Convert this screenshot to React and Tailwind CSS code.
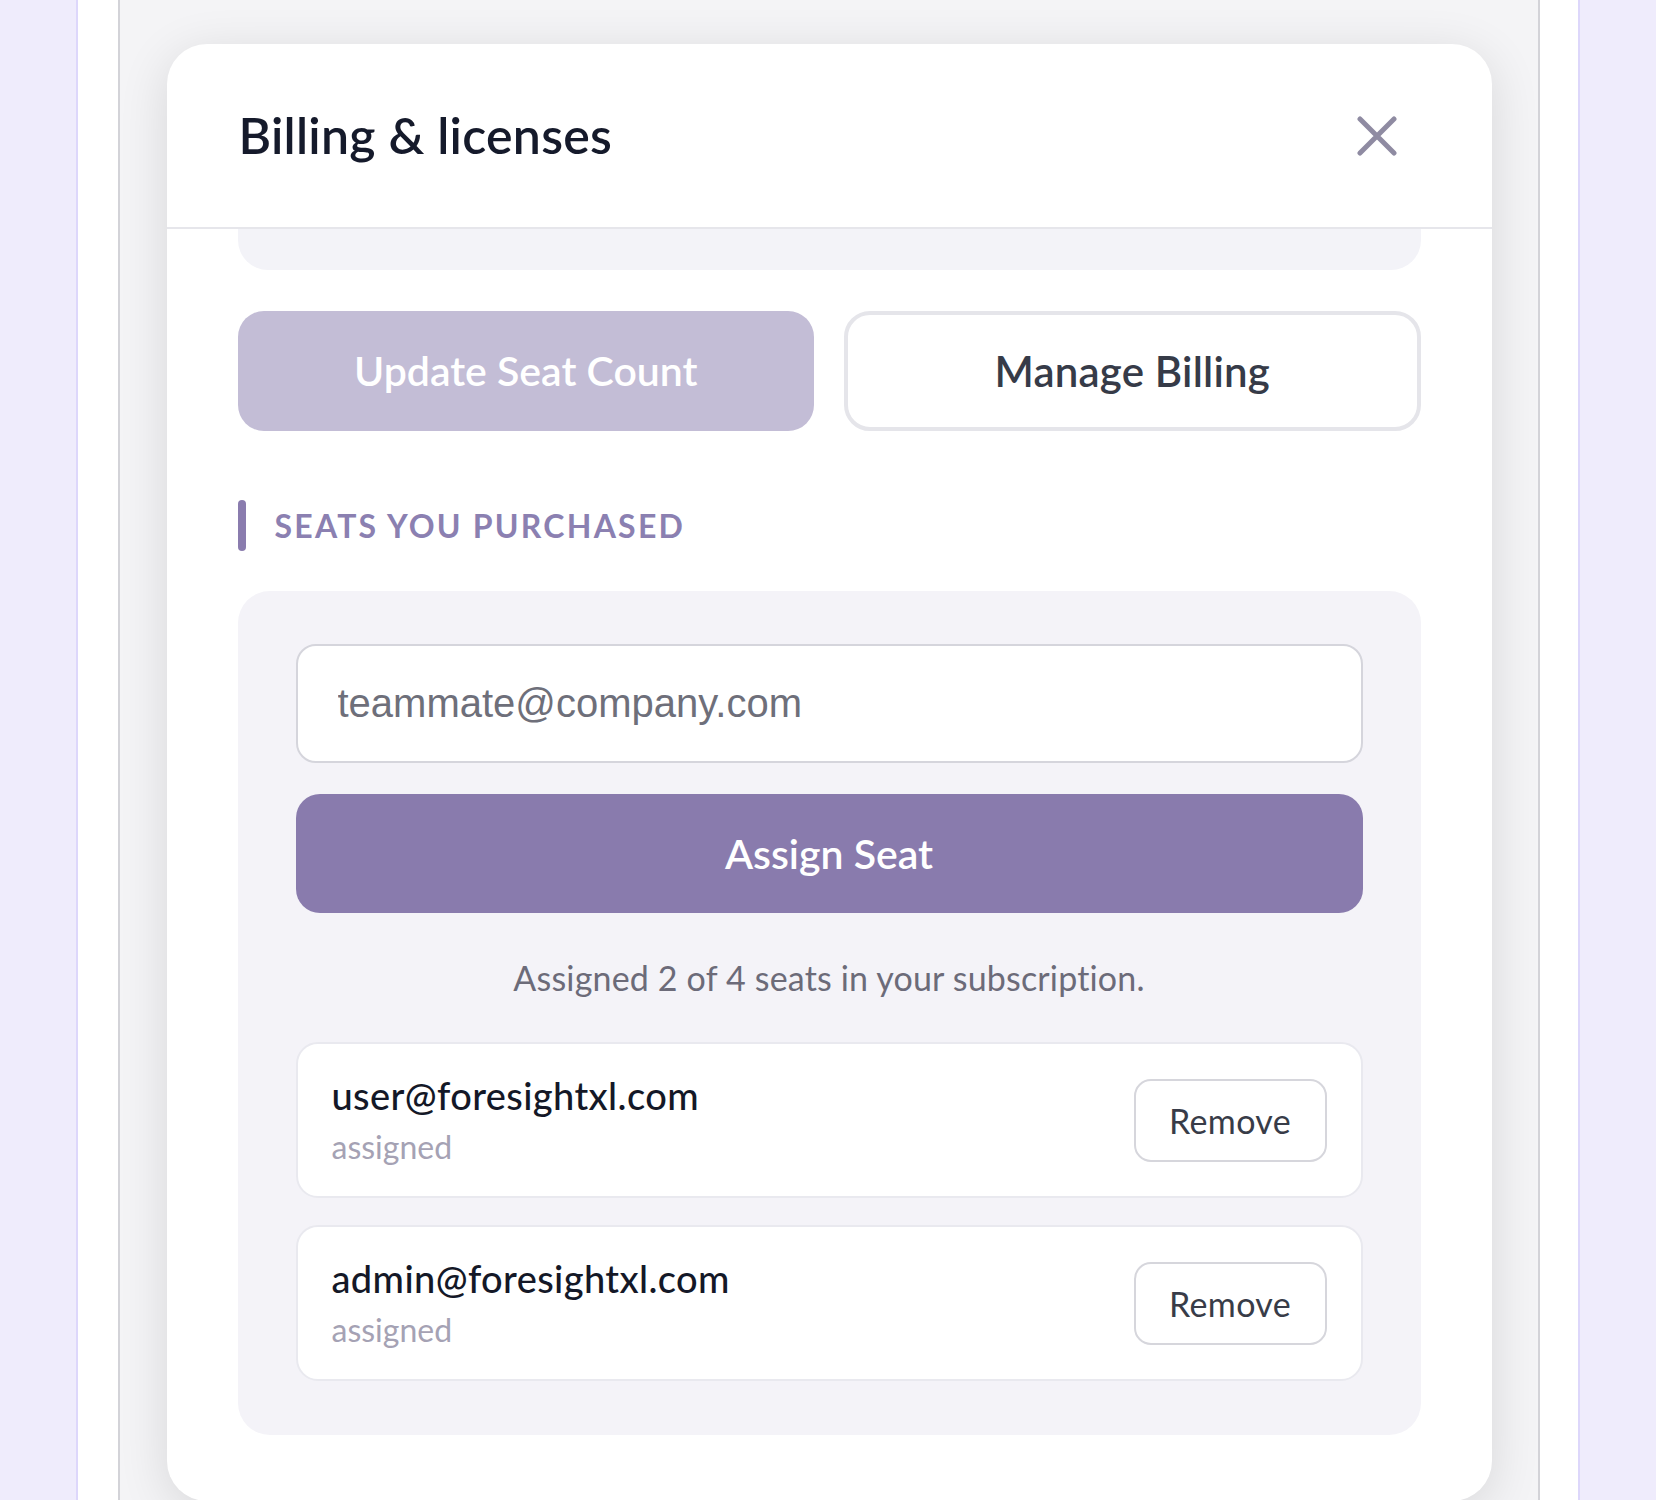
import React from 'react';

const seats = [
  { email: 'user@foresightxl.com', status: 'assigned' },
  { email: 'admin@foresightxl.com', status: 'assigned' },
];

const CloseIcon = () => (
  <svg width="40" height="40" viewBox="0 0 40 40" fill="none" stroke="#8f8ba2" strokeWidth="5" strokeLinecap="round">
    <path d="M3 3 37 37M37 3 3 37" />
  </svg>
);

const SeatRow = ({ seat }) => (
  <div className="flex items-center justify-between rounded-[22px] border-2 border-[#e9e9ef] bg-white pl-[34px] pr-[34px] h-[156px]">
    <div className="flex flex-col">
      <span className="text-[38px] leading-[50px] font-medium tracking-[0.01em] text-[#141827]">{seat.email}</span>
      <span className="text-[32px] leading-[48px] mt-[3px] text-[#a5a2b4]">{seat.status}</span>
    </div>
    <button className="h-[83px] w-[193px] rounded-[17px] border-2 border-[#d6d6dc] bg-white text-[34px] tracking-[0.01em] text-[#383c48]">
      Remove
    </button>
  </div>
);

const App = () => {
  return (
    <div className="min-h-screen bg-[#efecfc] px-[76px] font-['Lato','Noto_Sans',sans-serif]">
      <div className="min-h-screen bg-white border-x-2 border-[#ddd7fb] pl-[40px] pr-[38px]">
        <div className="min-h-screen bg-[#f4f4f6] border-x-2 border-[#d3d3d8] flex justify-center pt-[44px]">
          <div className="w-[1325px] rounded-[40px] bg-white shadow-[0_10px_50px_rgba(0,0,0,0.12)] overflow-hidden">
            {/* Header */}
            <div className="h-[185px] flex items-center justify-between pl-[72px] pr-[95px] border-b-2 border-[#e6e6eb]">
              <h2 className="text-[50px] font-semibold tracking-[0.005em] text-[#151a2b]">Billing &amp; licenses</h2>
              <button aria-label="Close">
                <CloseIcon />
              </button>
            </div>

            <div className="px-[71px] pb-[66px]">
              {/* scrolled-off summary card */}
              <div className="h-[41px] rounded-b-[30px] bg-[#f3f3f8]"></div>

              <div className="mt-[41px] grid grid-cols-2 gap-[30px]">
                <button className="h-[120px] rounded-[26px] bg-[#c3bdd6] text-[41px] font-semibold text-white">
                  Update Seat Count
                </button>
                <button className="h-[120px] rounded-[26px] border-4 border-[#e5e5ea] bg-white text-[42px] font-semibold tracking-[0.005em] text-[#363b48]">
                  Manage Billing
                </button>
              </div>

              <div className="mt-[69px] flex items-center gap-[29px]">
                <div className="w-2 h-[51px] rounded-full bg-[#8a7cae]"></div>
                <h3 className="text-[32px] font-bold uppercase tracking-[0.07em] text-[#8b80b1]">Seats you purchased</h3>
              </div>

              <div className="mt-[40px] rounded-[32px] bg-[#f4f3f8] px-[58px] pt-[53px] pb-[54px]">
                <input
                  type="email"
                  placeholder="teammate@company.com"
                  className="w-full h-[119px] rounded-[20px] border-2 border-[#d5d5dc] bg-white pl-[40px] text-[40px] font-['Liberation_Sans',Arial,sans-serif] text-[#374151] placeholder:text-[#6e6f7a] outline-none"
                />
                <button className="mt-[31px] w-full h-[119px] rounded-[24px] bg-[#897bad] text-[41px] font-semibold text-white">
                  Assign Seat
                </button>
                <p className="mt-[41px] text-center text-[34px] leading-[48px] tracking-[0.005em] text-[#6c6b79]">
                  Assigned 2 of 4 seats in your subscription.
                </p>
                <div className="mt-[40px] flex flex-col gap-[27px]">
                  {seats.map((seat) => (
                    <SeatRow key={seat.email} seat={seat} />
                  ))}
                </div>
              </div>
            </div>
          </div>
        </div>
      </div>
    </div>
  );
};

export default App;
